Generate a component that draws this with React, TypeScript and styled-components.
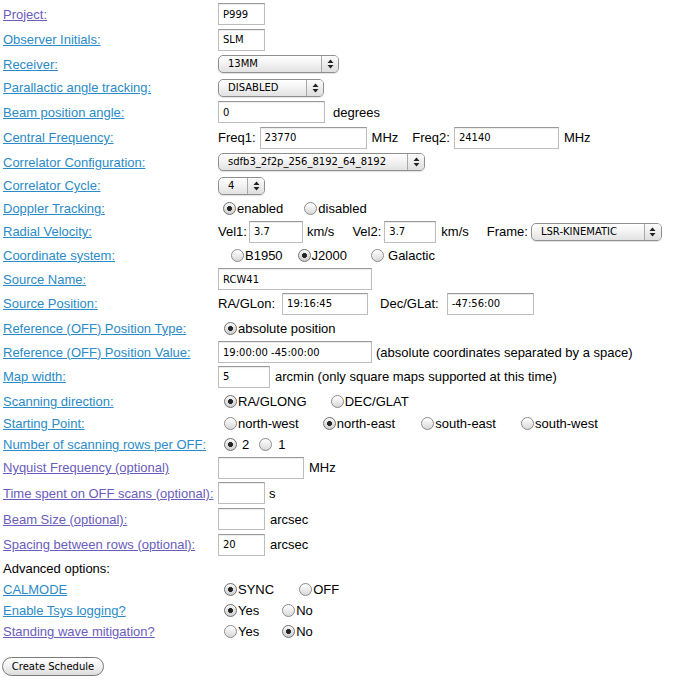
import React from "react";
import styled, { createGlobalStyle } from "styled-components";

const GlobalStyle = createGlobalStyle`
  html, body {
    margin: 0;
    padding: 0;
    background: #ffffff;
  }
  body {
    font-family: "Liberation Sans", Arial, Helvetica, sans-serif;
    font-size: 13px;
    color: #000;
  }
`;

const Form = styled.form`
  padding-top: 1px;
  margin: 0;
`;

const Row = styled.div<{ $h: number }>`
  display: grid;
  grid-template-columns: 215px 1fr;
  align-items: center;
  height: ${(p) => p.$h}px;
  padding-left: 3px;
`;

const LabelLink = styled.a<{ $visited?: boolean }>`
  color: ${(p) => (p.$visited ? "#6a5cbc" : "#2a8bc8")};
  text-decoration: underline;
  white-space: nowrap;
  font-size: 13px;
`;

const PlainLabel = styled.span`
  color: #000;
  white-space: nowrap;
`;

const ValueCell = styled.div`
  display: flex;
  align-items: center;
  white-space: nowrap;
`;

const Unit = styled.span<{ $ml?: number }>`
  margin-left: ${(p) => p.$ml ?? 0}px;
  color: #000;
`;

const TextInput = styled.input<{ $w: number; $ml?: number }>`
  box-sizing: border-box;
  width: ${(p) => p.$w}px;
  height: 22px;
  margin: 0 0 0 ${(p) => p.$ml ?? 0}px;
  padding: 0 0 0 4px;
  border: 1px solid #bdbdbd;
  border-top-color: #9a9a9a;
  box-shadow: inset 0 1px 1px rgba(0, 0, 0, 0.08);
  background: #fff;
  font-family: "DejaVu Sans", Verdana, sans-serif;
  font-size: 10px;
  color: #000;
  outline: none;
`;

const SelectWrap = styled.span<{ $w: number; $ml?: number }>`
  position: relative;
  display: inline-block;
  width: ${(p) => p.$w}px;
  height: 18px;
  margin-left: ${(p) => p.$ml ?? 0}px;
`;

const Select = styled.select`
  appearance: none;
  -webkit-appearance: none;
  box-sizing: border-box;
  width: 100%;
  height: 18px;
  margin: 0;
  padding: 0 20px 0 9px;
  border: 1px solid #8f8f8f;
  border-radius: 5px;
  background: linear-gradient(#ffffff 0%, #f3f3f3 45%, #e2e2e2 100%);
  box-shadow: 0 1px 1px rgba(0, 0, 0, 0.12);
  font-family: "DejaVu Sans", Verdana, sans-serif;
  font-size: 10px;
  line-height: 16px;
  color: #000;
  outline: none;
`;

const ArrowBox = styled.span`
  position: absolute;
  top: 1px;
  right: 1px;
  bottom: 1px;
  width: 16px;
  border-left: 1px solid #a8a8a8;
  border-radius: 0 4px 4px 0;
  background: linear-gradient(#fbfbfb, #dedede);
  display: flex;
  align-items: center;
  justify-content: center;
  pointer-events: none;
`;

const RadioLabel = styled.label<{ $ml?: number }>`
  display: inline-flex;
  align-items: center;
  margin-left: ${(p) => p.$ml ?? 0}px;
  color: #000;
`;

const RadioInput = styled.input<{ $gap?: number }>`
  appearance: none;
  -webkit-appearance: none;
  box-sizing: border-box;
  width: 13px;
  height: 13px;
  margin: 0 ${(p) => p.$gap ?? 1}px 0 0;
  border: 1px solid #8a8a8a;
  border-radius: 50%;
  background: linear-gradient(#ffffff, #d9d9d9);
  box-shadow: inset 0 1px 1px rgba(255, 255, 255, 0.8);
  &:checked {
    background: radial-gradient(circle at 50% 50%, #262626 0 2.2px, transparent 2.8px),
      linear-gradient(#f4f4f4, #cfcfcf);
    border-color: #6f6f6f;
  }
`;

const Button = styled.button`
  box-sizing: border-box;
  margin: 15px 0 0 2px;
  width: 102px;
  height: 19px;
  padding: 0;
  border: 1px solid #7a7a7a;
  border-radius: 10px;
  background: linear-gradient(#ffffff 0%, #f1f1f1 50%, #dcdcdc 100%);
  font-family: "DejaVu Sans", Verdana, sans-serif;
  font-size: 10px;
  color: #000;
`;

const Arrows = () => (
  <svg width="7" height="10" viewBox="0 0 7 10">
    <path d="M3.5 0.5 L6.5 4 L0.5 4 Z" fill="#222" />
    <path d="M0.5 6 L6.5 6 L3.5 9.5 Z" fill="#222" />
  </svg>
);

const Dropdown = ({ w, ml, value }: { w: number; ml?: number; value: string }) => (
  <SelectWrap $w={w} $ml={ml}>
    <Select defaultValue={value}>
      <option value={value}>{value}</option>
    </Select>
    <ArrowBox>
      <Arrows />
    </ArrowBox>
  </SelectWrap>
);

const Radio = ({
  name,
  label,
  checked,
  ml,
  gap,
}: {
  name: string;
  label: string;
  checked?: boolean;
  ml?: number;
  gap?: number;
}) => (
  <RadioLabel $ml={ml}>
    <RadioInput type="radio" name={name} defaultChecked={checked} $gap={gap} />
    {label}
  </RadioLabel>
);

const Label = ({ text, visited }: { text: string; visited?: boolean }) => (
  <div>
    <LabelLink href="#" $visited={visited} onClick={(e) => e.preventDefault()}>
      {text}
    </LabelLink>
  </div>
);

export default function App() {
  return (
    <>
      <GlobalStyle />
      <Form onSubmit={(e) => e.preventDefault()}>
        <Row $h={26}>
          <Label text="Project:" visited />
          <ValueCell>
            <TextInput $w={47} defaultValue="P999" />
          </ValueCell>
        </Row>
        <Row $h={25}>
          <Label text="Observer Initials:" />
          <ValueCell>
            <TextInput $w={47} defaultValue="SLM" />
          </ValueCell>
        </Row>
        <Row $h={24}>
          <Label text="Receiver:" />
          <ValueCell>
            <Dropdown w={121} value="13MM" />
          </ValueCell>
        </Row>
        <Row $h={23}>
          <Label text="Parallactic angle tracking:" />
          <ValueCell>
            <Dropdown w={106} value="DISABLED" />
          </ValueCell>
        </Row>
        <Row $h={26}>
          <Label text="Beam position angle:" />
          <ValueCell>
            <TextInput $w={107} defaultValue="0" />
            <Unit $ml={8}>degrees</Unit>
          </ValueCell>
        </Row>
        <Row $h={25}>
          <Label text="Central Frequency:" />
          <ValueCell>
            <Unit>Freq1:</Unit>
            <TextInput $w={107} $ml={4} defaultValue="23770" />
            <Unit $ml={5}>MHz</Unit>
            <Unit $ml={14}>Freq2:</Unit>
            <TextInput $w={105} $ml={4} defaultValue="24140" />
            <Unit $ml={5}>MHz</Unit>
          </ValueCell>
        </Row>
        <Row $h={24}>
          <Label text="Correlator Configuration:" />
          <ValueCell>
            <Dropdown w={207} value="sdfb3_2f2p_256_8192_64_8192" />
          </ValueCell>
        </Row>
        <Row $h={23}>
          <Label text="Correlator Cycle:" />
          <ValueCell>
            <Dropdown w={47} value="4" />
          </ValueCell>
        </Row>
        <Row $h={23}>
          <Label text="Doppler Tracking:" />
          <ValueCell>
            <Radio name="doppler" label="enabled" checked ml={5} />
            <Radio name="doppler" label="disabled" ml={21} />
          </ValueCell>
        </Row>
        <Row $h={23}>
          <Label text="Radial Velocity:" />
          <ValueCell>
            <Unit>Vel1:</Unit>
            <TextInput $w={54} $ml={2} defaultValue="3.7" />
            <Unit $ml={4}>km/s</Unit>
            <Unit $ml={18}>Vel2:</Unit>
            <TextInput $w={52} $ml={3} defaultValue="3.7" />
            <Unit $ml={5}>km/s</Unit>
            <Unit $ml={18}>Frame:</Unit>
            <Dropdown w={131} ml={3} value="LSR-KINEMATIC" />
          </ValueCell>
        </Row>
        <Row $h={24}>
          <Label text="Coordinate system:" />
          <ValueCell>
            <Radio name="coord" label="B1950" ml={13} />
            <Radio name="coord" label="J2000" checked ml={15} />
            <Radio name="coord" label="Galactic" ml={24} gap={4} />
          </ValueCell>
        </Row>
        <Row $h={24}>
          <Label text="Source Name:" />
          <ValueCell>
            <TextInput $w={154} defaultValue="RCW41" />
          </ValueCell>
        </Row>
        <Row $h={25}>
          <Label text="Source Position:" />
          <ValueCell>
            <Unit>RA/GLon:</Unit>
            <TextInput $w={86} $ml={7} defaultValue="19:16:45" />
            <Unit $ml={12}>Dec/GLat:</Unit>
            <TextInput $w={87} $ml={8} defaultValue="-47:56:00" />
          </ValueCell>
        </Row>
        <Row $h={24}>
          <Label text="Reference (OFF) Position Type:" />
          <ValueCell>
            <Radio name="reftype" label="absolute position" checked ml={6} />
          </ValueCell>
        </Row>
        <Row $h={24}>
          <Label text="Reference (OFF) Position Value:" />
          <ValueCell>
            <TextInput $w={154} defaultValue="19:00:00 -45:00:00" />
            <Unit $ml={4}>(absolute coordinates separated by a space)</Unit>
          </ValueCell>
        </Row>
        <Row $h={25}>
          <Label text="Map width:" />
          <ValueCell>
            <TextInput $w={52} defaultValue="5" />
            <Unit $ml={5}>arcmin (only square maps supported at this time)</Unit>
          </ValueCell>
        </Row>
        <Row $h={24}>
          <Label text="Scanning direction:" />
          <ValueCell>
            <Radio name="scan" label="RA/GLONG" checked ml={6} />
            <Radio name="scan" label="DEC/GLAT" ml={24} />
          </ValueCell>
        </Row>
        <Row $h={21}>
          <Label text="Starting Point:" />
          <ValueCell>
            <Radio name="start" label="north-west" ml={6} />
            <Radio name="start" label="north-east" checked ml={24} />
            <Radio name="start" label="south-east" ml={26} />
            <Radio name="start" label="south-west" ml={25} />
          </ValueCell>
        </Row>
        <Row $h={21}>
          <Label text="Number of scanning rows per OFF:" />
          <ValueCell>
            <Radio name="rows" label="2" checked ml={6} gap={5} />
            <Radio name="rows" label="1" ml={10} gap={6} />
          </ValueCell>
        </Row>
        <Row $h={25}>
          <Label text="Nyquist Frequency (optional)" visited />
          <ValueCell>
            <TextInput $w={86} />
            <Unit $ml={5}>MHz</Unit>
          </ValueCell>
        </Row>
        <Row $h={26}>
          <Label text="Time spent on OFF scans (optional):" visited />
          <ValueCell>
            <TextInput $w={47} />
            <Unit $ml={4}>s</Unit>
          </ValueCell>
        </Row>
        <Row $h={26}>
          <Label text="Beam Size (optional):" visited />
          <ValueCell>
            <TextInput $w={47} />
            <Unit $ml={5}>arcsec</Unit>
          </ValueCell>
        </Row>
        <Row $h={25}>
          <Label text="Spacing between rows (optional):" visited />
          <ValueCell>
            <TextInput $w={47} defaultValue="20" />
            <Unit $ml={5}>arcsec</Unit>
          </ValueCell>
        </Row>
        <Row $h={22}>
          <PlainLabel>Advanced options:</PlainLabel>
          <ValueCell />
        </Row>
        <Row $h={21}>
          <Label text="CALMODE" />
          <ValueCell>
            <Radio name="calmode" label="SYNC" checked ml={6} />
            <Radio name="calmode" label="OFF" ml={25} />
          </ValueCell>
        </Row>
        <Row $h={21}>
          <Label text="Enable Tsys logging?" />
          <ValueCell>
            <Radio name="tsys" label="Yes" checked ml={6} />
            <Radio name="tsys" label="No" ml={23} />
          </ValueCell>
        </Row>
        <Row $h={21}>
          <Label text="Standing wave mitigation?" visited />
          <ValueCell>
            <Radio name="wave" label="Yes" ml={6} />
            <Radio name="wave" label="No" checked ml={23} />
          </ValueCell>
        </Row>
        <Button type="submit">Create Schedule</Button>
      </Form>
    </>
  );
}
